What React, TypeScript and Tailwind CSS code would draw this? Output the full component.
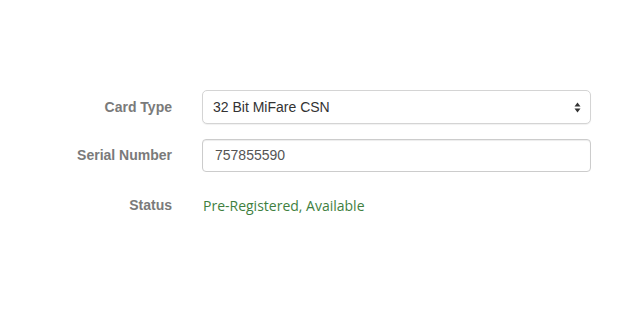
import React from 'react';

const sans = "font-['Liberation_Sans',Arial,sans-serif]";

function Label({ children }: { children: React.ReactNode }) {
  return (
    <div className={`w-[172px] shrink-0 text-right text-[14px] font-bold text-[#7a7a7a] ${sans}`}>
      {children}
    </div>
  );
}

function SelectArrows() {
  return (
    <svg width="7" height="11" viewBox="0 0 7 11" className="shrink-0">
      <path d="M3.5 0.5 L6.5 4.5 L0.5 4.5 Z" fill="#333" />
      <path d="M0.5 6.5 L6.5 6.5 L3.5 10.5 Z" fill="#333" />
    </svg>
  );
}

export default function App() {
  return (
    <div className="w-[634px] h-[323px] bg-white pt-[90px]">
      <form className="flex flex-col">
        {/* Card type */}
        <div className="flex items-center">
          <Label>Card Type</Label>
          <div className="ml-[30px] w-[389px] h-[34px] flex items-center justify-between pl-[10px] pr-[9px] rounded-[5px] border border-[#d4d4d4] bg-white shadow-[0_1px_1px_rgba(0,0,0,0.06)]">
            <span className={`text-[14px] text-[#333] ${sans}`}>32 Bit MiFare CSN</span>
            <SelectArrows />
          </div>
        </div>

        {/* Serial number */}
        <div className="flex items-center mt-[15px]">
          <Label>Serial Number</Label>
          <div className="ml-[30px] w-[389px] h-[33px] flex items-center px-[12px] rounded-[4px] border border-[#ccc] bg-white shadow-[inset_0_1px_1px_rgba(0,0,0,0.075)]">
            <span className={`text-[14px] text-[#555] ${sans}`}>757855590</span>
          </div>
        </div>

        {/* Status */}
        <div className="flex items-center mt-[23px]">
          <Label>Status</Label>
          <div className="ml-[31px] text-[14px] leading-[20px] text-[#3f7f3f] font-['Open_Sans',sans-serif]">
            Pre-Registered, Available
          </div>
        </div>
      </form>
    </div>
  );
}
